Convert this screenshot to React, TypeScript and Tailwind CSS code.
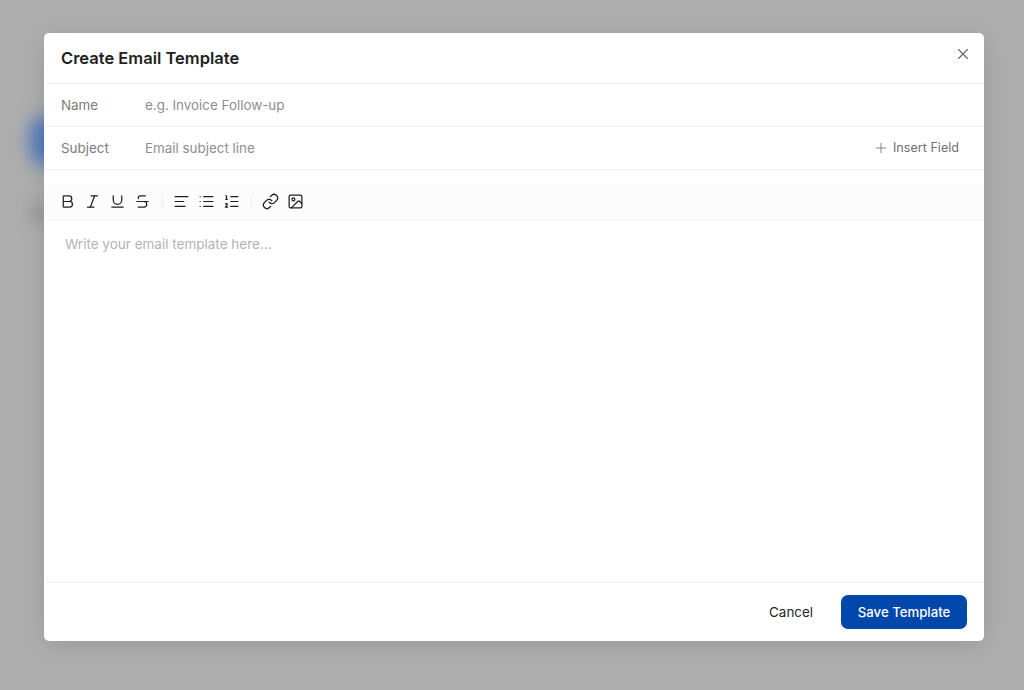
import { AlignLeft, Bold, Image, Italic, Link, List, ListOrdered, Plus, Strikethrough, Underline, X } from 'lucide-react';

const groups = [
  [Bold, Italic, Underline, Strikethrough],
  [AlignLeft, List, ListOrdered],
  [Link, Image],
];

function Toolbar() {
  return (
    <div className="mt-[14px] flex h-[37px] items-center border-b border-[#f3f3f3] bg-[#fcfcfc] pb-[2px] pl-[15px] text-[#1f1f1f]">
      {groups.map((icons, i) => (
        <div key={i} className="flex items-center">
          {i > 0 && <div className="mx-[10.5px] h-[13px] w-px bg-[#ececec]" />}
          <div className="flex items-center gap-[8px]">
            {icons.map((Icon, j) => (
              <Icon key={j} size={17} strokeWidth={1.75} />
            ))}
          </div>
        </div>
      ))}
    </div>
  );
}

export default function App() {
  return (
    <div className="relative h-[690px] w-[1024px] overflow-hidden bg-[#aeaeae] pl-[44px] pt-[33px] font-['Inter',sans-serif]">
      <div className="absolute left-[30px] top-[116px] h-[50px] w-[34px] rounded-full bg-[#4f78c0] blur-[9px]" />
      <div className="absolute left-[28px] top-[205px] h-[16px] w-[30px] rounded-full bg-[#989898] blur-[8px]" />

      <div className="relative flex h-[608px] w-[940px] flex-col rounded-[5px] bg-white shadow-[0_4px_24px_rgba(0,0,0,0.12)]">
        <div className="flex h-[51px] items-center justify-between border-b border-[#f3f3f3] pl-[17px] pr-[12px]">
          <h2 className="mt-[1px] text-[16.5px] font-semibold text-[#222222]">Create Email Template</h2>
          <X size={18} strokeWidth={1.5} className="mb-[9px] text-[#666666]" />
        </div>

        <div className="flex h-[43px] items-center border-b border-[#f3f3f3] pl-[17px] text-[13.4px] text-[#7c7c7c]">
          <span className="w-[84px]">Name</span>
          <span className="text-[#8e8e8e]">e.g. Invoice Follow-up</span>
        </div>

        <div className="flex h-[43px] items-center border-b border-[#f3f3f3] pl-[17px] pr-[25px] text-[13.4px] text-[#7c7c7c]">
          <span className="w-[84px]">Subject</span>
          <span className="flex-1 text-[#8e8e8e]">Email subject line</span>
          <span className="flex items-center gap-[4px] text-[12.6px] text-[#707070]">
            <Plus size={16} strokeWidth={1.25} />
            Insert Field
          </span>
        </div>

        <Toolbar />

        <div className="flex-1 px-[21px] pt-[13px] text-[13.5px] text-[#b4b4b4]">Write your email template here...</div>

        <div className="flex h-[59px] items-center justify-end gap-[28px] border-t border-[#f3f3f3] pr-[17px]">
          <span className="text-[13.4px] text-[#1f1f1f]">Cancel</span>
          <button className="h-[34px] w-[126px] rounded-[7px] bg-[#0047ab] pt-[1px] text-[13.2px] font-medium text-white">
            Save Template
          </button>
        </div>
      </div>
    </div>
  );
}
